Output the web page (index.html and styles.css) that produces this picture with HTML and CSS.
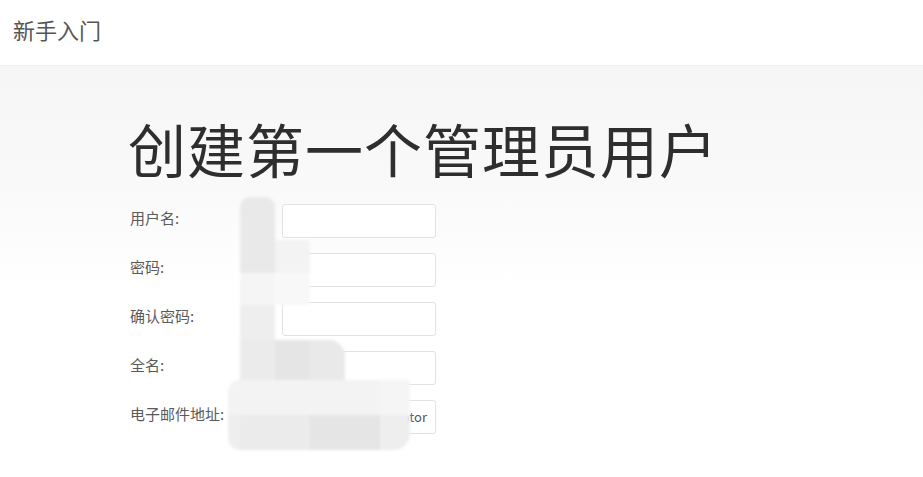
FILE: index.html
```html
<!DOCTYPE html>
<html lang="zh-CN">
<head>
<meta charset="utf-8">
<title>新手入门</title>
<link rel="stylesheet" href="styles.css">
</head>
<body>
<header class="topbar">
  <span class="brand">新手入门</span>
</header>
<main class="content">
  <h1 class="title">创建第一个管理员用户</h1>
  <form class="form">
    <label class="label">用户名:</label>
    <div class="input"></div>
    <label class="label">密码:</label>
    <div class="input"></div>
    <label class="label">确认密码:</label>
    <div class="input"></div>
    <label class="label">全名:</label>
    <div class="input"></div>
    <label class="label">电子邮件地址:</label>
    <div class="input input-value">administrator</div>
  </form>
  <div class="mosaic" aria-hidden="true">
    <i></i><i class="s2 rt"></i><i></i><i></i><i></i><i></i>
    <i></i><i class="s2"></i><i class="s6"></i><i></i><i></i><i></i>
    <i></i><i class="s7"></i><i class="s8"></i><i></i><i></i><i></i>
    <i></i><i class="s4"></i><i></i><i></i><i></i><i></i>
    <i></i><i class="s3"></i><i class="s1"></i><i class="s2 rtr"></i><i></i><i></i>
    <i class="s6 rtl"></i><i class="s6"></i><i class="s6"></i><i class="s6"></i><i class="s6"></i><i class="s7"></i>
    <i class="s4 rbl"></i><i class="s3"></i><i class="s3"></i><i class="s1"></i><i class="s1"></i><i class="s4 rbr"></i>
  </div>
</main>
</body>
</html>
```

FILE: styles.css
```css
html, body {
  margin: 0;
  padding: 0;
  background: #ffffff;
  font-family: "Noto Sans CJK SC", "Noto Sans", "Liberation Sans", sans-serif;
  color: #333;
}

.topbar {
  height: 66px;
  box-sizing: border-box;
  padding: 14px 0 0 13px;
  background: #ffffff;
  border-bottom: 1px solid #f0f0f0;
}

.brand {
  font-size: 22px;
  line-height: 30px;
  color: #555;
}

.content {
  position: relative;
  min-height: 411px;
  box-sizing: border-box;
  padding: 47px 0 0 128px;
  background: linear-gradient(to bottom, #f6f6f6 0px, #f9f9f9 120px, #ffffff 220px);
}

.title {
  margin: 0;
  font-size: 58px;
  font-weight: 400;
  line-height: 70px;
  color: #2e2e2e;
  letter-spacing: 1px;
}

.form {
  display: grid;
  grid-template-columns: 152px 154px;
  row-gap: 15px;
  margin: 21px 0 0 2px;
  align-items: center;
}

.label {
  font-size: 15px;
  color: #5a5a5a;
  line-height: 20px;
  margin-top: -6px;
}

.input {
  height: 34px;
  box-sizing: border-box;
  border: 1px solid #e2e2e2;
  border-radius: 3px;
  background: #fff;
}

.input-value {
  font-size: 13px;
  color: #555;
  line-height: 32px;
  text-align: right;
  padding-right: 8px;
  overflow: hidden;
  white-space: nowrap;
}

.mosaic {
  position: absolute;
  left: 228px;
  top: 131px;
  width: 182px;
  height: 253px;
  display: grid;
  grid-template-columns: 12px 35px 35px 35px 35px 30px;
  grid-template-rows: 43px 33px 32px 35px 40px 35px 35px;
  filter: blur(1.5px);
}

.mosaic i { display: block; }
.mosaic .s1 { background: #e5e5e5; }
.mosaic .s2 { background: #e9e9e9; }
.mosaic .s3 { background: #ebebeb; }
.mosaic .s4 { background: #eeeeee; }
.mosaic .s6 { background: #f3f3f3; }
.mosaic .s7 { background: #f5f5f5; }
.mosaic .s8 { background: #f8f8f8; }
.mosaic .rt { border-radius: 10px 10px 0 0; }
.mosaic .rtr { border-radius: 0 16px 0 0; }
.mosaic .rtl { border-radius: 14px 0 0 0; }
.mosaic .rbl { border-radius: 0 0 0 16px; }
.mosaic .rbr { border-radius: 0 0 16px 0; }
```
